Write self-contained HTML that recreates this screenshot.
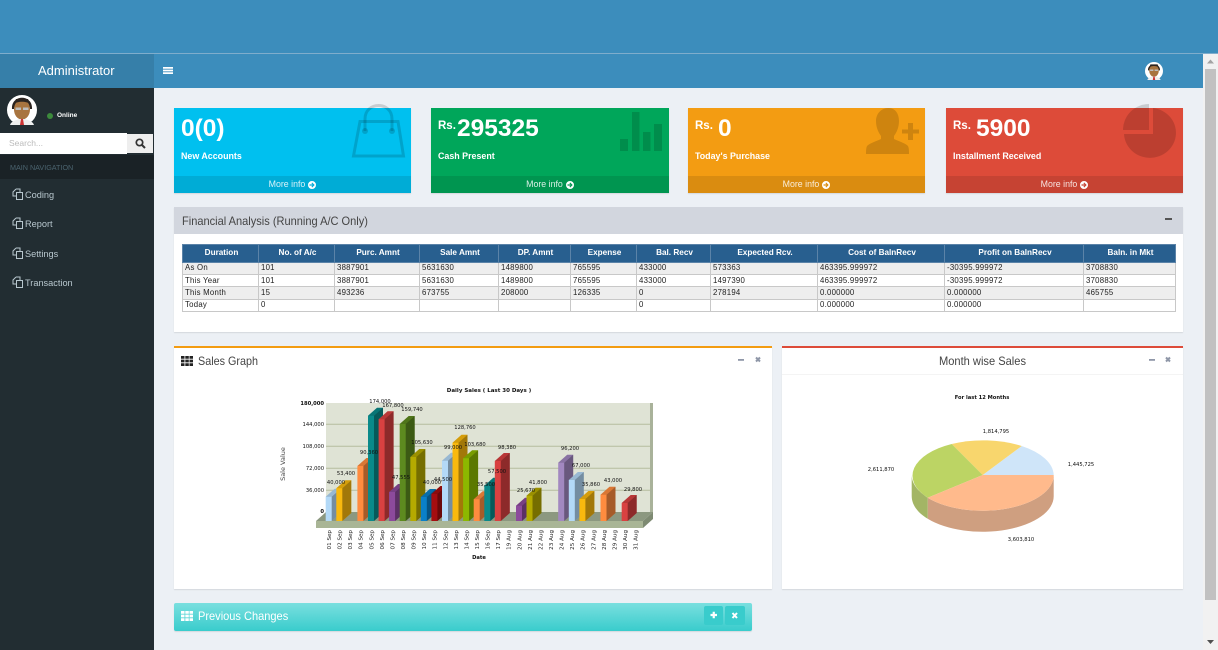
<!DOCTYPE html>
<html><head><meta charset="utf-8"><title>Administrator</title>
<style>
html,body{margin:0;padding:0;width:1218px;height:650px;overflow:hidden;background:#ecf0f5;font-family:"Liberation Sans",sans-serif}
body{filter:blur(.3px)}
div,span,svg{position:absolute;white-space:nowrap}
.card{top:108px;height:85px;box-shadow:0 1px 1px rgba(0,0,0,.1)}
.foot{left:0;right:0;bottom:0;height:17px;background:rgba(0,0,0,.1);color:rgba(255,255,255,.85);font-size:8.8px;line-height:17px;text-align:center}
.foot svg{position:static;vertical-align:-1.500px;margin-left:3px}
.num{color:#fff;font-weight:bold;font-size:24.500px;line-height:30px;top:6px}
.rs{color:#fff;font-weight:bold;font-size:11.500px;line-height:14px;top:11px}
.lbl{color:#fff;font-weight:bold;font-size:8.900px;line-height:12px;top:42px;left:7px}
.nav{left:25px;color:#b8c7ce;font-size:9.200px;line-height:12px}
.wb{background:#fff;box-shadow:0 1px 1px rgba(0,0,0,.1)}
.h{color:#444;font-size:12px;line-height:14px;transform-origin:0 0;transform:scaleX(.92)}
table{position:absolute;left:182px;top:244px;width:993px;height:68px;border-collapse:collapse;table-layout:fixed;font-family:"Liberation Sans",sans-serif;font-size:7.8px;color:#222;letter-spacing:.25px}
td,th{border:1px solid #c8c8c8;padding:0 0 0 2px;overflow:hidden;white-space:nowrap;line-height:10px;height:11px}
th{background:#285f8f;color:#fff;text-align:center;font-size:8.2px;height:16px;border-color:#5b83a8;letter-spacing:0}
tr.g td{background:#eee}
svg text{font-family:"DejaVu Sans",sans-serif}
</style></head>
<body>
<!-- top band + header -->
<div style="left:0;top:0;width:1218px;height:54px;background:#3c8dbc"></div>
<div style="left:0;top:53px;width:1218px;height:1px;background:#7fadcc"></div>
<div style="left:0;top:54px;width:1203px;height:34px;background:#3c8dbc"></div>
<div style="left:0;top:54px;width:154px;height:34px;background:#367fa9"></div>
<div style="left:38px;top:63px;color:#fff;font-size:13px;line-height:16px">Administrator</div>
<svg style="left:163px;top:67px" width="10" height="7"><path d="M0 0h10v1.800H0zM0 2.600h10v1.800H0zM0 5.200h10V7H0z" fill="#fff"/></svg>
<svg style="left:1145px;top:62px" width="18" height="18" viewBox="0 0 30 30">
<circle cx="15" cy="15" r="15" fill="#fff"/><path d="M5 14C4 1 26 1 25 14H23C23 7 7 7 7 14z" fill="#2b2420"/><ellipse cx="15" cy="14.500" rx="8" ry="10" fill="#a8743f"/><path d="M7 9c3-3 13-3 16 0l-2-5H9z" fill="#2b2420"/><path d="M8.500 12.500h5.500v2.500H8.500zM16 12.500h5.500v2.500H16z" fill="#bdbdbd"/><path d="M4 30c1-4 6-5 8-6h6c2 1 7 2 8 6z" fill="#eee"/><path d="M14 24h2l1 6h-4z" fill="#c33"/></svg>

<!-- sidebar -->
<div style="left:0;top:88px;width:154px;height:562px;background:#222d32"></div>
<svg style="left:7px;top:95px" width="30" height="30" viewBox="0 0 30 30">
<circle cx="15" cy="15" r="15" fill="#fff"/><path d="M5 14C4 -1 26 -1 25 14H23C23 7 7 7 7 14z" fill="#2b2420"/><ellipse cx="15" cy="14.500" rx="8" ry="10" fill="#a8743f"/><path d="M7 9c3-3 13-3 16 0l-2-5H9z" fill="#2b2420"/><path d="M8.500 12.500h5.500v2.500H8.500zM16 12.500h5.500v2.500H16z" fill="#bdbdbd"/><path d="M3 30c1-4 7-5 9-6h6c2 1 8 2 9 6z" fill="#eee"/><path d="M14 24h2l1 6h-4z" fill="#c33"/></svg>
<div style="left:47px;top:113px;width:6px;height:6px;border-radius:3px;background:#3c8a3c"></div>
<div style="left:57px;top:111px;color:#fff;font-size:6.500px;font-weight:bold;line-height:10px">Online</div>
<div style="left:0;top:133px;width:127px;height:21px;background:#fff;color:#bbb;font-size:8.5px;line-height:21px;text-indent:9px">Search...</div>
<div style="left:127px;top:134px;width:26px;height:19px;background:#eee"></div>
<svg style="left:135px;top:138px" width="11" height="11" viewBox="0 0 11 11"><circle cx="4.500" cy="4.500" r="3.200" fill="none" stroke="#333" stroke-width="1.700"/><path d="M7 7l3 3" stroke="#333" stroke-width="2"/></svg>
<div style="left:0;top:155px;width:154px;height:24px;background:#1a2226"></div>
<div style="left:10px;top:162px;color:#4b646f;font-size:7.2px;line-height:12px">MAIN NAVIGATION</div>
<svg style="left:12px;top:188px" width="11" height="12" viewBox="0 0 11 12"><path d="M4 1h4v3M4 1L1 4v4h3" fill="none" stroke="#b8c7ce"/><path d="M4.500 4.500h6v7h-6z" fill="none" stroke="#b8c7ce"/></svg>
<svg style="left:12px;top:217px" width="11" height="12" viewBox="0 0 11 12"><path d="M4 1h4v3M4 1L1 4v4h3" fill="none" stroke="#b8c7ce"/><path d="M4.500 4.500h6v7h-6z" fill="none" stroke="#b8c7ce"/></svg>
<svg style="left:12px;top:247px" width="11" height="12" viewBox="0 0 11 12"><path d="M4 1h4v3M4 1L1 4v4h3" fill="none" stroke="#b8c7ce"/><path d="M4.500 4.500h6v7h-6z" fill="none" stroke="#b8c7ce"/></svg>
<svg style="left:12px;top:276px" width="11" height="12" viewBox="0 0 11 12"><path d="M4 1h4v3M4 1L1 4v4h3" fill="none" stroke="#b8c7ce"/><path d="M4.500 4.500h6v7h-6z" fill="none" stroke="#b8c7ce"/></svg>
<div class="nav" style="top:189px">Coding</div>
<div class="nav" style="top:218px">Report</div>
<div class="nav" style="top:248px">Settings</div>
<div class="nav" style="top:277px">Transaction</div>

<!-- cards -->
<div class="card" style="left:174px;width:237px;background:#00c0ef">
<div class="num" style="left:7px">0(0)</div><div class="lbl">New Accounts</div><div class="foot">More info<svg width="8" height="8" viewBox="0 0 8 8"><path fill-rule="evenodd" fill="#fff" d="M4 0a4 4 0 1 0 0 8a4 4 0 1 0 0-8zM4.200 1.500L6.700 4L4.200 6.500L3.400 5.700L4.500 4.600H1.500V3.400H4.500L3.400 2.300z"/></svg></div></div>
<div class="card" style="left:431px;width:238px;background:#00a65a">
<div class="rs" style="left:7px">Rs.</div><div class="num" style="left:26px">295325</div><div class="lbl">Cash Present</div><div class="foot">More info<svg width="8" height="8" viewBox="0 0 8 8"><path fill-rule="evenodd" fill="#fff" d="M4 0a4 4 0 1 0 0 8a4 4 0 1 0 0-8zM4.200 1.500L6.700 4L4.200 6.500L3.400 5.700L4.500 4.600H1.500V3.400H4.500L3.400 2.300z"/></svg></div></div>
<div class="card" style="left:688px;width:237px;background:#f39c12">
<div class="rs" style="left:7px">Rs.</div><div class="num" style="left:30px">0</div><div class="lbl">Today's Purchase</div><div class="foot">More info<svg width="8" height="8" viewBox="0 0 8 8"><path fill-rule="evenodd" fill="#fff" d="M4 0a4 4 0 1 0 0 8a4 4 0 1 0 0-8zM4.200 1.500L6.700 4L4.200 6.500L3.400 5.700L4.500 4.600H1.500V3.400H4.500L3.400 2.300z"/></svg></div></div>
<div class="card" style="left:946px;width:237px;background:#dd4b39">
<div class="rs" style="left:7px">Rs.</div><div class="num" style="left:30px">5900</div><div class="lbl">Installment Received</div><div class="foot">More info<svg width="8" height="8" viewBox="0 0 8 8"><path fill-rule="evenodd" fill="#fff" d="M4 0a4 4 0 1 0 0 8a4 4 0 1 0 0-8zM4.200 1.500L6.700 4L4.200 6.500L3.400 5.700L4.500 4.600H1.500V3.400H4.500L3.400 2.300z"/></svg></div></div>
<svg style="left:0;top:0" width="1218" height="200" fill="rgba(0,0,0,.15)">
<path d="M353.500 156L360 121.500H398L403.500 156Z" fill="none" stroke="rgba(0,0,0,.15)" stroke-width="3"/>
<path d="M365 131V119C365 101 392 101 392 119V131" fill="none" stroke="rgba(0,0,0,.15)" stroke-width="3"/>
<circle cx="365" cy="131" r="3"/><circle cx="392" cy="131" r="3"/>
<path d="M620 139h8v12h-8zM632 112h7.500v39H632zM643 132h7.500v19H643zM654 124h8v27h-8z"/>
<path d="M888.500 108c7 0 10.500 6 10.500 13 0 6-2 11-5 15v3c4 2 11 4 14 7 1 2 1 5 1 8h-43c0-3 0-6 1-8 3-3 10-5 14-7v-3c-3-4-5-9-5-15 0-7 5-13 12.500-13z"/>
<path d="M908 123h5v6.500h6v4h-6v6.500h-5v-6.500h-6v-4h6z"/>
<path d="M1153 108A26 25 0 1 1 1124 134H1153Z"/>
<path d="M1149 104V130H1123A26 26 0 0 1 1149 104Z"/>
</svg>

<!-- financial -->
<div class="wb" style="left:174px;top:207px;width:1009px;height:125px"></div>
<div style="left:174px;top:207px;width:1009px;height:27px;background:#d2d6de"></div>
<div class="h" style="left:182px;top:214px">Financial Analysis (Running A/C Only)</div>
<div style="left:1165px;top:218px;width:7px;height:2px;background:#555"></div>
<table>
<colgroup><col style="width:76px"><col style="width:76px"><col style="width:85px"><col style="width:79px"><col style="width:72px"><col style="width:66px"><col style="width:74px"><col style="width:107px"><col style="width:127px"><col style="width:139px"><col style="width:92px"></colgroup>
<tr><th>Duration</th><th>No. of A/c</th><th>Purc. Amnt</th><th>Sale Amnt</th><th>DP. Amnt</th><th>Expense</th><th>Bal. Recv</th><th>Expected Rcv.</th><th>Cost of BalnRecv</th><th>Profit on BalnRecv</th><th>Baln. in Mkt</th></tr>
<tr class="g"><td>As On</td><td>101</td><td>3887901</td><td>5631630</td><td>1489800</td><td>765595</td><td>433000</td><td>573363</td><td>463395.999972</td><td>-30395.999972</td><td>3708830</td></tr>
<tr><td>This Year</td><td>101</td><td>3887901</td><td>5631630</td><td>1489800</td><td>765595</td><td>433000</td><td>1497390</td><td>463395.999972</td><td>-30395.999972</td><td>3708830</td></tr>
<tr class="g"><td>This Month</td><td>15</td><td>493236</td><td>673755</td><td>208000</td><td>126335</td><td>0</td><td>278194</td><td>0.000000</td><td>0.000000</td><td>465755</td></tr>
<tr><td>Today</td><td>0</td><td></td><td></td><td></td><td></td><td>0</td><td></td><td>0.000000</td><td>0.000000</td><td></td></tr>
</table>

<!-- sales graph box -->
<div class="wb" style="left:174px;top:346px;width:598px;height:243px"></div>
<div style="left:174px;top:346px;width:598px;height:2px;background:#f39c12"></div>
<svg style="left:181px;top:356px" width="12" height="10"><path d="M0 0h3.500v2.800H0zM4.300 0h3.500v2.800H4.300zM8.500 0H12v2.800H8.500zM0 3.600h3.500v2.800H0zM4.300 3.600h3.500v2.800H4.300zM8.500 3.600H12v2.800H8.500zM0 7.200h3.500V10H0zM4.300 7.200h3.500V10H4.300zM8.500 7.200H12V10H8.500z" fill="#222"/></svg>
<div class="h" style="left:198px;top:354px;transform:scaleX(.9)">Sales Graph</div>
<svg style="left:735px;top:354px" width="30" height="12"><path d="M3 5h6v1.800H3z" fill="#8f97a8"/><path d="M21 3.500l4 4M25 3.500l-4 4" stroke="#8f97a8" stroke-width="2"/></svg>

<!-- month box -->
<div class="wb" style="left:782px;top:346px;width:401px;height:243px"></div>
<div style="left:782px;top:346px;width:401px;height:2px;background:#dd4b39"></div>
<div style="left:782px;top:374px;width:401px;height:1px;background:#f4f4f4"></div>
<div class="h" style="left:939px;top:354px;transform:scaleX(.925)">Month wise Sales</div>
<svg style="left:1146px;top:354px" width="30" height="12"><path d="M3 5h6v1.800H3z" fill="#8f97a8"/><path d="M20 3.500l4 4M24 3.500l-4 4" stroke="#8f97a8" stroke-width="2"/></svg>

<!-- bar chart -->
<svg style="left:0;top:0" width="1218" height="650">
<rect x="326" y="403" width="327" height="110" fill="#dfe3d5"/>
<rect x="650" y="403" width="3" height="110" fill="#a9b29a"/>
<path d="M326 424.300H650M326 446.300H650M326 468.300H650M326 490.300H650" stroke="#b5bd9e" stroke-width="1"/>
<path d="M316 521L326 512H653L643 521Z" fill="#8c9880"/>
<path d="M643 521L653 512V519L643 528Z" fill="#7e8a72"/>
<rect x="316" y="521" width="327" height="7" fill="#a9b596"/>
<g id="bars">
<g transform="translate(325.7 0)"><path fill="#b3d9f7" d="M0 496.700l9-8h6V513l-9 8H0z"/><path fill-opacity=".35" d="M6 496.700l9-8V513l-9 8z"/><path fill-opacity=".15" d="M0 496.700l9-8h6l-9 8z"/></g>
<g transform="translate(336.300 0)"><path fill="#f9b90e" d="M0 488.300l9-8h6V513l-9 8H0z"/><path fill-opacity=".35" d="M6 488.300l9-8V513l-9 8z"/><path fill-opacity=".15" d="M0 488.300l9-8h6l-9 8z"/></g>
<g transform="translate(357.400 0)"><path fill="#ff8c3f" d="M0 466l9-8h6V513l-9 8H0z"/><path fill-opacity=".35" d="M6 466l9-8V513l-9 8z"/><path fill-opacity=".15" d="M0 466l9-8h6l-9 8z"/></g>
<g transform="translate(368 0)"><path fill="#0a8a8a" d="M0 415.700l9-8h6V513l-9 8H0z"/><path fill-opacity=".35" d="M6 415.700l9-8V513l-9 8z"/><path fill-opacity=".15" d="M0 415.700l9-8h6l-9 8z"/></g>
<g transform="translate(378.600 0)"><path fill="#d94141" d="M0 419.300l9-8h6V513l-9 8H0z"/><path fill-opacity=".35" d="M6 419.300l9-8V513l-9 8z"/><path fill-opacity=".15" d="M0 419.300l9-8h6l-9 8z"/></g>
<g transform="translate(389.100 0)"><path fill="#8c4a9c" d="M0 492l9-8h6V513l-9 8H0z"/><path fill-opacity=".35" d="M6 492l9-8V513l-9 8z"/><path fill-opacity=".15" d="M0 492l9-8h6l-9 8z"/></g>
<g transform="translate(399.700 0)"><path fill="#5d8a1f" d="M0 424l9-8h6V513l-9 8H0z"/><path fill-opacity=".35" d="M6 424l9-8V513l-9 8z"/><path fill-opacity=".15" d="M0 424l9-8h6l-9 8z"/></g>
<g transform="translate(410.300 0)"><path fill="#b5aa00" d="M0 457l9-8h6V513l-9 8H0z"/><path fill-opacity=".35" d="M6 457l9-8V513l-9 8z"/><path fill-opacity=".15" d="M0 457l9-8h6l-9 8z"/></g>
<g transform="translate(420.800 0)"><path fill="#0a80c8" d="M0 497l9-8h6V513l-9 8H0z"/><path fill-opacity=".35" d="M6 497l9-8V513l-9 8z"/><path fill-opacity=".15" d="M0 497l9-8h6l-9 8z"/></g>
<g transform="translate(431.400 0)"><path fill="#a50d10" d="M0 494l9-8h6V513l-9 8H0z"/><path fill-opacity=".35" d="M6 494l9-8V513l-9 8z"/><path fill-opacity=".15" d="M0 494l9-8h6l-9 8z"/></g>
<g transform="translate(442 0)"><path fill="#b3d9f7" d="M0 460.700l9-8h6V513l-9 8H0z"/><path fill-opacity=".35" d="M6 460.700l9-8V513l-9 8z"/><path fill-opacity=".15" d="M0 460.700l9-8h6l-9 8z"/></g>
<g transform="translate(452.500 0)"><path fill="#f9b90e" d="M0 442.700l9-8h6V513l-9 8H0z"/><path fill-opacity=".35" d="M6 442.700l9-8V513l-9 8z"/><path fill-opacity=".15" d="M0 442.700l9-8h6l-9 8z"/></g>
<g transform="translate(463.100 0)"><path fill="#8cb800" d="M0 458.300l9-8h6V513l-9 8H0z"/><path fill-opacity=".35" d="M6 458.300l9-8V513l-9 8z"/><path fill-opacity=".15" d="M0 458.300l9-8h6l-9 8z"/></g>
<g transform="translate(473.700 0)"><path fill="#ff8c3f" d="M0 499.300l9-8h6V513l-9 8H0z"/><path fill-opacity=".35" d="M6 499.300l9-8V513l-9 8z"/><path fill-opacity=".15" d="M0 499.300l9-8h6l-9 8z"/></g>
<g transform="translate(484.300 0)"><path fill="#0a8a8a" d="M0 485.700l9-8h6V513l-9 8H0z"/><path fill-opacity=".35" d="M6 485.700l9-8V513l-9 8z"/><path fill-opacity=".15" d="M0 485.700l9-8h6l-9 8z"/></g>
<g transform="translate(494.800 0)"><path fill="#d94141" d="M0 461l9-8h6V513l-9 8H0z"/><path fill-opacity=".35" d="M6 461l9-8V513l-9 8z"/><path fill-opacity=".15" d="M0 461l9-8h6l-9 8z"/></g>
<g transform="translate(516 0)"><path fill="#8c4a9c" d="M0 505.700l9-8h6V513l-9 8H0z"/><path fill-opacity=".35" d="M6 505.700l9-8V513l-9 8z"/><path fill-opacity=".15" d="M0 505.700l9-8h6l-9 8z"/></g>
<g transform="translate(526.500 0)"><path fill="#b5aa00" d="M0 495.700l9-8h6V513l-9 8H0z"/><path fill-opacity=".35" d="M6 495.700l9-8V513l-9 8z"/><path fill-opacity=".15" d="M0 495.700l9-8h6l-9 8z"/></g>
<g transform="translate(558.200 0)"><path fill="#a288c0" d="M0 462.700l9-8h6V513l-9 8H0z"/><path fill-opacity=".35" d="M6 462.700l9-8V513l-9 8z"/><path fill-opacity=".15" d="M0 462.700l9-8h6l-9 8z"/></g>
<g transform="translate(568.800 0)"><path fill="#b3d9f7" d="M0 480l9-8h6V513l-9 8H0z"/><path fill-opacity=".35" d="M6 480l9-8V513l-9 8z"/><path fill-opacity=".15" d="M0 480l9-8h6l-9 8z"/></g>
<g transform="translate(579.400 0)"><path fill="#f9b90e" d="M0 499l9-8h6V513l-9 8H0z"/><path fill-opacity=".35" d="M6 499l9-8V513l-9 8z"/><path fill-opacity=".15" d="M0 499l9-8h6l-9 8z"/></g>
<g transform="translate(600.500 0)"><path fill="#ff8c3f" d="M0 494.700l9-8h6V513l-9 8H0z"/><path fill-opacity=".35" d="M6 494.700l9-8V513l-9 8z"/><path fill-opacity=".15" d="M0 494.700l9-8h6l-9 8z"/></g>
<g transform="translate(621.700 0)"><path fill="#d94141" d="M0 503l9-8h6V513l-9 8H0z"/><path fill-opacity=".35" d="M6 503l9-8V513l-9 8z"/><path fill-opacity=".15" d="M0 503l9-8h6l-9 8z"/></g>
</g>
<g font-size="5.200" fill="#111" text-anchor="middle">
<text x="489" y="392" font-weight="bold" font-size="5.500">Daily Sales ( Last 30 Days )</text>
<text x="479" y="559" font-weight="bold">Date</text>
<text transform="translate(285 464) rotate(-90)" font-size="6.500" fill="#444">Sale Value</text>
<text x="380" y="403">174,000</text><text x="393" y="407">167,800</text><text x="412" y="411">159,740</text><text x="369" y="454">90,360</text><text x="346" y="475">53,400</text><text x="336" y="484">40,000</text><text x="401" y="479">47,555</text><text x="422" y="444">105,630</text><text x="432" y="484">40,000</text><text x="443" y="481">44,500</text><text x="465" y="429">128,760</text><text x="453" y="449">99,000</text><text x="475" y="446">103,680</text><text x="486" y="486">35,500</text><text x="497" y="473">57,500</text><text x="507" y="449">98,380</text><text x="526" y="492">25,670</text><text x="538" y="484">41,800</text><text x="570" y="450">96,200</text><text x="581" y="467">67,000</text><text x="591" y="486">35,860</text><text x="613" y="482">43,000</text><text x="633" y="491">29,800</text>
</g>
<g font-size="5.200" fill="#111" text-anchor="end">
<text x="324" y="405" font-weight="bold">180,000</text><text x="324" y="426">144,000</text><text x="324" y="448">108,000</text><text x="324" y="470">72,000</text><text x="324" y="492">36,000</text><text x="324" y="513" font-weight="bold">0</text>
</g>
<g font-size="5.600" fill="#222" text-anchor="end">
<text transform="translate(331 530) rotate(-90)">01 Sep</text><text transform="translate(341.600 530) rotate(-90)">02 Sep</text><text transform="translate(352.100 530) rotate(-90)">03 Sep</text><text transform="translate(362.700 530) rotate(-90)">04 Sep</text><text transform="translate(373.300 530) rotate(-90)">05 Sep</text><text transform="translate(383.900 530) rotate(-90)">06 Sep</text><text transform="translate(394.400 530) rotate(-90)">07 Sep</text><text transform="translate(405 530) rotate(-90)">08 Sep</text><text transform="translate(415.600 530) rotate(-90)">09 Sep</text><text transform="translate(426.100 530) rotate(-90)">10 Sep</text><text transform="translate(436.700 530) rotate(-90)">11 Sep</text><text transform="translate(447.300 530) rotate(-90)">12 Sep</text><text transform="translate(457.800 530) rotate(-90)">13 Sep</text><text transform="translate(468.400 530) rotate(-90)">14 Sep</text><text transform="translate(479 530) rotate(-90)">15 Sep</text><text transform="translate(489.600 530) rotate(-90)">16 Sep</text><text transform="translate(500.100 530) rotate(-90)">17 Sep</text><text transform="translate(510.700 530) rotate(-90)">19 Aug</text><text transform="translate(521.300 530) rotate(-90)">20 Aug</text><text transform="translate(531.800 530) rotate(-90)">21 Aug</text><text transform="translate(542.400 530) rotate(-90)">22 Aug</text><text transform="translate(553 530) rotate(-90)">23 Aug</text><text transform="translate(563.500 530) rotate(-90)">24 Aug</text><text transform="translate(574.100 530) rotate(-90)">25 Aug</text><text transform="translate(584.700 530) rotate(-90)">26 Aug</text><text transform="translate(595.300 530) rotate(-90)">27 Aug</text><text transform="translate(605.800 530) rotate(-90)">28 Aug</text><text transform="translate(616.400 530) rotate(-90)">29 Aug</text><text transform="translate(627 530) rotate(-90)">30 Aug</text><text transform="translate(637.500 530) rotate(-90)">31 Aug</text>
</g>
<!-- pie -->
<path d="M927.700 497.700A71 35.500 0 0 0 1053.700 475V496A71 35.500 0 0 1 927.700 518.700Z" fill="#cf9f80"/>
<path d="M911.700 475V496C911.700 505 918 513 927.700 518.700V497.700C918 491 911.700 484 911.700 475Z" fill="#a3b565"/>
<path d="M982.700 475L1053.700 475A71 35.500 0 0 0 1021.700 446Z" fill="#cfe5f9"/>
<path d="M982.700 475L1021.700 446A71 35.500 0 0 0 951.700 444Z" fill="#f8d66d"/>
<path d="M982.700 475L951.700 444A71 35.500 0 0 0 927.700 497.700Z" fill="#bcd464"/>
<path d="M982.700 475L927.700 497.700A71 35.500 0 0 0 1053.700 475Z" fill="#ffba8c"/>
<g font-size="5.200" fill="#111" text-anchor="middle">
<text x="982" y="399" font-weight="bold">For last 12 Months</text>
<text x="996" y="433">1,814,795</text><text x="881" y="471">2,611,870</text><text x="1081" y="466">1,445,725</text><text x="1021" y="541">3,603,810</text>
</g>
</svg>

<!-- previous changes -->
<div style="left:174px;top:603px;width:578px;height:28px;border-radius:2px;background:linear-gradient(#7adfdf,#39cccc);box-shadow:0 1px 1px rgba(0,0,0,.1)"></div>
<svg style="left:181px;top:611px" width="12" height="10"><path d="M0 0h3.500v2.800H0zM4.300 0h3.500v2.800H4.300zM8.500 0H12v2.800H8.500zM0 3.600h3.500v2.800H0zM4.300 3.600h3.500v2.800H4.300zM8.500 3.600H12v2.800H8.500zM0 7.200h3.500V10H0zM4.300 7.200h3.500V10H4.300zM8.500 7.200H12V10H8.500z" fill="#fff"/></svg>
<div class="h" style="left:198px;top:609px;color:#fff;line-height:15px">Previous Changes</div>
<div style="left:704px;top:606px;width:19px;height:19px;border-radius:2px;background:#39cccc"></div>
<div style="left:725px;top:606px;width:20px;height:19px;border-radius:2px;background:#39cccc"></div>
<svg style="left:704px;top:606px" width="41" height="19"><path d="M6.500 9h6.500M9.750 5.750v6.500" stroke="#fff" stroke-width="2.200"/><path d="M28.500 7l4.500 5M33 7l-4.500 5" stroke="#fff" stroke-width="2"/></svg>

<!-- scrollbar -->
<div style="left:1203px;top:54px;width:15px;height:596px;background:#f1f1f1"></div>
<div style="left:1205px;top:69px;width:11px;height:531px;background:#c1c1c1"></div>
<svg style="left:1203px;top:54px" width="15" height="596"><path d="M7.500 5.500L11 9.500H4z" fill="#a3a3a3"/><path d="M4 586h7l-3.500 4z" fill="#505050"/></svg>
</body></html>
